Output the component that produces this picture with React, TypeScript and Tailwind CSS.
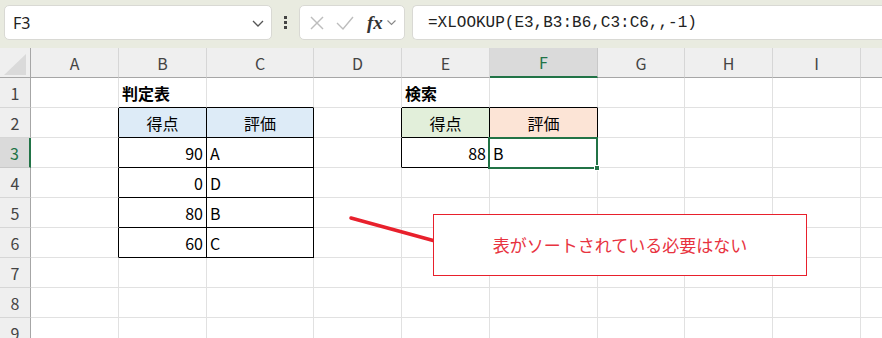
import React from "react";

const cols = [
  { l: "A", w: 88 },
  { l: "B", w: 88 },
  { l: "C", w: 107 },
  { l: "D", w: 88 },
  { l: "E", w: 88 },
  { l: "F", w: 108 },
  { l: "G", w: 87 },
  { l: "H", w: 88 },
  { l: "I", w: 88 },
  { l: "J", w: 88 },
];

type Cell = { t: string; align?: "l" | "r" | "c"; bold?: boolean; bg?: string };

const cells: Record<string, Cell> = {
  B1: { t: "判定表", bold: true },
  B2: { t: "得点", align: "c", bg: "bg-[#ddebf7]" },
  C2: { t: "評価", align: "c", bg: "bg-[#ddebf7]" },
  B3: { t: "90", align: "r" },
  C3: { t: "A" },
  B4: { t: "0", align: "r" },
  C4: { t: "D" },
  B5: { t: "80", align: "r" },
  C5: { t: "B" },
  B6: { t: "60", align: "r" },
  C6: { t: "C" },
  E1: { t: "検索", bold: true },
  E2: { t: "得点", align: "c", bg: "bg-[#e2efda]" },
  F2: { t: "評価", align: "c", bg: "bg-[#fce4d6]" },
  E3: { t: "88", align: "r" },
  F3: { t: "B" },
};

// cells that belong to one of the two bordered tables
const inTable = (c: number, r: number) =>
  (c >= 1 && c <= 2 && r >= 2 && r <= 6) || (c >= 4 && c <= 5 && r >= 2 && r <= 3);

function Toolbar() {
  return (
    <div className="flex h-[48px] items-start gap-[0px] bg-[#e9ebe0] pt-[5px]">
      <div className="ml-[4px] flex h-[35px] w-[268px] items-center justify-between rounded-[5px] border border-[#d9d9d4] bg-white pl-[8px] pr-[6px]">
        <span className="text-[16px] text-[#222]" style={{ fontFamily: '"Noto Sans", sans-serif' }}>
          F3
        </span>
        <svg width="14" height="14" viewBox="0 0 14 14" fill="none" stroke="#555" strokeWidth="1.3">
          <polyline points="2,5 7,10 12,5" />
        </svg>
      </div>
      <div className="flex h-[35px] w-[27px] flex-col items-center justify-center gap-[2px]">
        <span className="h-[3px] w-[3px] bg-[#444]" />
        <span className="h-[3px] w-[3px] bg-[#444]" />
        <span className="h-[3px] w-[3px] bg-[#444]" />
      </div>
      <div className="flex h-[35px] w-[106px] items-center rounded-[5px] border border-[#d9d9d4] bg-white pl-[8px]">
        <svg width="18" height="18" viewBox="0 0 18 18" stroke="#bdbdbd" strokeWidth="1.4" fill="none">
          <line x1="3" y1="3" x2="15" y2="15" />
          <line x1="15" y1="3" x2="3" y2="15" />
        </svg>
        <svg className="ml-[9px]" width="20" height="18" viewBox="0 0 20 18" stroke="#bdbdbd" strokeWidth="1.4" fill="none">
          <polyline points="2,9 8,15 18,3" />
        </svg>
        <span
          className="ml-[12px] text-[19px] italic font-bold leading-none text-[#333]"
          style={{ fontFamily: '"Liberation Serif", serif' }}
        >
          fx
        </span>
        <svg className="ml-[3px]" width="11" height="11" viewBox="0 0 11 11" fill="none" stroke="#888" strokeWidth="1.1">
          <polyline points="1.5,3.5 5.5,7.5 9.5,3.5" />
        </svg>
      </div>
      <div className="ml-[7px] flex h-[35px] flex-1 items-center rounded-l-[5px] border border-r-0 border-[#d9d9d4] bg-white pl-[15px]">
        <span className="text-[16px] text-[#222]" style={{ fontFamily: '"Liberation Mono", monospace' }}>
          =XLOOKUP(E3,B3:B6,C3:C6,,-1)
        </span>
      </div>
    </div>
  );
}

function HeaderRow() {
  return (
    <div className="flex h-[30px]">
      <div className="relative w-[31px] shrink-0 border-r border-b border-[#a6a6a6] bg-[#efefef]">
        <svg className="absolute right-[4px] bottom-[2px]" width="22" height="21" viewBox="0 0 22 21">
          <polygon points="22,0 22,21 0,21" fill="#dadada" />
        </svg>
      </div>
      {cols.map((c) => {
        const sel = c.l === "F";
        return (
          <div
            key={c.l}
            style={{ width: c.w }}
            className={
              "flex shrink-0 items-center justify-center border-r text-[16px] " +
              (sel
                ? "border-b-2 border-r-[#c8c8c8] border-b-[#217346] bg-[#dadada] text-[#217346]"
                : "border-b border-r-[#d6d6d6] border-b-[#a6a6a6] bg-[#efefef] text-[#444]")
            }
          >
            {c.l}
          </div>
        );
      })}
    </div>
  );
}

function Row({ r }: { r: number }) {
  const sel = r === 3;
  return (
    <div className="flex h-[30px]">
      <div
        className={
          "flex w-[31px] shrink-0 items-center justify-center border-b text-[16px] " +
          (sel
            ? "border-r-2 border-r-[#217346] border-b-[#c8c8c8] bg-[#dadada] text-[#217346]"
            : "border-r border-r-[#a6a6a6] border-b-[#d6d6d6] bg-[#efefef] text-[#444]")
        }
      >
        {r}
      </div>
      {cols.map((c, ci) => {
        const key = c.l + r;
        const cell = cells[key];
        const rightBlack = inTable(ci, r) || inTable(ci + 1, r);
        const bottomBlack = inTable(ci, r) || inTable(ci, r + 1);
        const align =
          cell?.align === "r" ? "justify-end pr-[3px]" : cell?.align === "c" ? "justify-center" : "justify-start pl-[3px]";
        return (
          <div
            key={key}
            style={{ width: c.w }}
            className={
              "relative flex shrink-0 items-center border-r border-b text-[16px] text-black " +
              (rightBlack ? "border-r-black " : "border-r-[#e1e1e1] ") +
              (bottomBlack ? "border-b-black " : "border-b-[#e1e1e1] ") +
              align +
              " " +
              (cell?.bg ?? "") +
              (cell?.bold ? " font-bold" : "")
            }
          >
            {cell && <span className="pt-[1px]">{cell.t}</span>}
            {key === "F3" && (
              <div className="absolute -top-[1px] -left-[2px] -right-[1px] -bottom-[2px] z-10 border-2 border-[#217346]">
                <div className="absolute -right-[4px] -bottom-[4px] h-[6px] w-[6px] border border-white bg-[#217346]" />
              </div>
            )}
          </div>
        );
      })}
    </div>
  );
}

export default function App() {
  return (
    <div
      className="relative h-[338px] w-[882px] overflow-hidden bg-white"
      style={{ fontFamily: '"Noto Sans CJK JP", "Noto Sans", sans-serif' }}
    >
      <Toolbar />
      <HeaderRow />
      {[1, 2, 3, 4, 5, 6, 7, 8, 9].map((r) => (
        <Row key={r} r={r} />
      ))}

      {/* callout */}
      <svg className="absolute left-[345px] top-[212px]" width="95" height="36" viewBox="0 0 95 36">
        <line x1="6" y1="6" x2="90" y2="29" stroke="#e8202c" strokeWidth="3.5" strokeLinecap="round" />
      </svg>
      <div className="absolute left-[433px] top-[214px] flex h-[62px] w-[374px] items-center justify-center border border-[#e8202c] bg-white">
        <span className="text-[17px] text-[#e8333f]">表がソートされている必要はない</span>
      </div>
    </div>
  );
}
